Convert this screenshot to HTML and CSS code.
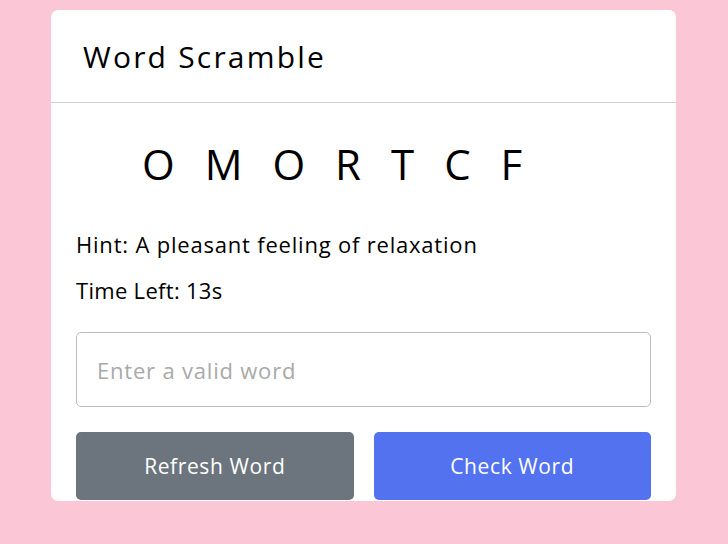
FILE: index.html
```html
<!DOCTYPE html>
<html>
<head>
<meta charset="utf-8">
<link rel="stylesheet" href="styles.css">
</head>
<body>
<div class="card">
  <header class="card-head">Word Scramble</header>
  <div class="card-body">
    <p class="word">OMORTCF</p>
    <div class="details">
      <p class="hint">Hint: <span>A pleasant feeling of relaxation</span></p>
      <p class="time">Time Left: <span>13s</span></p>
    </div>
    <input class="entry" type="text" placeholder="Enter a valid word">
    <div class="buttons">
      <button class="btn refresh">Refresh Word</button>
      <button class="btn check">Check Word</button>
    </div>
  </div>
</div>
</body>
</html>
```
FILE: styles.css
```css
* { box-sizing: border-box; }
html, body { margin: 0; padding: 0; }
body {
  background: #fbc6d6;
  font-family: "Open Sans", "DejaVu Sans", sans-serif;
  height: 544px;
  overflow: hidden;
}
.card {
  margin: 10px 0 0 51px;
  width: 625px;
  height: 491px;
  background: #fff;
  border-radius: 7px;
  overflow: hidden;
}
.card-head {
  height: 93px;
  padding: 0 0 0 32px;
  display: flex;
  align-items: center;
  font-size: 30px;
  letter-spacing: 2.2px;
  color: #000;
  border-bottom: 1px solid #cfcfcf;
}
.card-body {
  padding: 0 25px;
}
.word {
  margin: 36px 0 0 0;
  padding-left: 66px;
  font-size: 42px;
  letter-spacing: 30px;
  line-height: 50px;
  color: #000;
}
.details { margin-top: 41px; }
.details p {
  margin: 0;
  font-size: 22px;
  line-height: 28px;
  letter-spacing: 0.8px;
  color: #000;
}
.details .hint { margin-bottom: 18px; }
.details .time { letter-spacing: 0.3px; }
.entry {
  display: block;
  margin-top: 28px;
  width: 575px;
  height: 75px;
  border: 1px solid #bcbcbc;
  border-radius: 5px;
  padding: 0 20px;
  font-family: inherit;
  font-size: 22px;
  letter-spacing: 0.8px;
  outline: none;
}
.entry::placeholder { color: #a9a9a9; }
.buttons {
  margin-top: 25px;
  display: flex;
  gap: 20px;
}
.btn {
  flex: 1;
  height: 68px;
  border: none;
  border-radius: 5px;
  color: #fff;
  font-family: inherit;
  font-size: 21px;
  letter-spacing: 0.6px;
}
.refresh { background: #6c757d; }
.check { background: #5372f0; }
```
